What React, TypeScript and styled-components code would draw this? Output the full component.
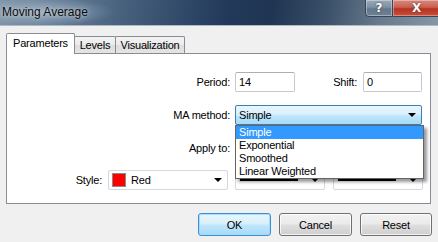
import React from "react";
import styled, { createGlobalStyle } from "styled-components";

const Global = createGlobalStyle`
  html, body { margin: 0; padding: 0; background: #f0f0f0; }
  body { font-family: "Liberation Sans", Arial, sans-serif; font-size: 11px; letter-spacing: -0.2px; color: #000; }
  * { box-sizing: border-box; }
`;

const Window = styled.div`
  width: 438px;
  height: 242px;
  display: flex;
  flex-direction: column;
  background: #f0f0f0;
  overflow: hidden;
`;

const TitleBar = styled.div`
  height: 26px;
  flex: none;
  display: flex;
  align-items: flex-start;
  border-bottom: 1px solid #aeb9c4;
  background:
    radial-gradient(ellipse 70px 14px at 45px 12px, rgba(190, 205, 220, 0.55), rgba(190, 205, 220, 0) 100%),
    linear-gradient(100deg, #8196aa 0%, #637c95 14%, #405a77 32%, #22395a 52%, #1f3552 62%, #3a4f68 74%, #66788b 86%, #8796a5 100%);
`;

const Title = styled.div`
  font-size: 12px;
  letter-spacing: 0;
  padding: 5px 0 0 2px;
  color: #0a0a0a;
  text-shadow: 0 0 6px rgba(255, 255, 255, 0.55), 0 0 2px rgba(255, 255, 255, 0.4);
`;

const Caption = styled.div`
  margin-left: auto;
  display: flex;
  margin-top: -1px;
  margin-right: -3px;
`;

const CapButton = styled.div<{ $close?: boolean }>`
  width: ${(p) => (p.$close ? 48 : 28)}px;
  height: 18px;
  display: flex;
  align-items: center;
  justify-content: center;
  color: #fff;
  font-family: "DejaVu Sans", sans-serif;
  font-weight: bold;
  font-size: 12px;
  text-shadow: 0 0 2px #333;
  border: 1px solid #35465a;
  border-left-width: ${(p) => (p.$close ? 0 : 1)}px;
  border-radius: ${(p) => (p.$close ? "0 0 4px 0" : "0 0 0 4px")};
  box-shadow: inset 0 0 0 1px rgba(255, 255, 255, 0.35);
  background: ${(p) =>
    p.$close
      ? "linear-gradient(#d8897e 0%, #c9604f 45%, #b8321f 55%, #c8503a 100%)"
      : "linear-gradient(#9aa9b8 0%, #7f90a2 45%, #63778c 55%, #6e8296 100%)"};
`;

const TabStrip = styled.div`
  display: flex;
  align-items: flex-end;
  height: 20px;
  margin-top: 7px;
  padding-left: 6px;
  position: relative;
  z-index: 1;
`;

const Tab = styled.div<{ $active?: boolean; $w: number }>`
  width: ${(p) => p.$w}px;
  height: ${(p) => (p.$active ? 21 : 17)}px;
  margin-bottom: ${(p) => (p.$active ? -1 : 0)}px;
  margin-left: ${(p) => (p.$active ? 0 : -1)}px;
  border: 1px solid #898c95;
  border-bottom: none;
  border-radius: 2px 2px 0 0;
  background: ${(p) =>
    p.$active ? "#fff" : "linear-gradient(#f3f3f3 0%, #ebebeb 50%, #dddddd 51%, #e4e4e4 100%)"};
  display: flex;
  align-items: center;
  justify-content: center;
  padding-bottom: ${(p) => (p.$active ? 3 : 0)}px;
  &:first-child { margin-left: 0; }
`;

const Panel = styled.div`
  margin-left: 6px;
  width: 425px;
  height: 151px;
  flex: none;
  border: 1px solid #898c95;
  background: #fff;
  padding: 18px 0 0 0;
  display: flex;
  flex-direction: column;
`;

const Row = styled.div<{ $top?: number; $raised?: boolean }>`
  display: flex;
  align-items: center;
  height: 20px;
  margin-top: ${(p) => p.$top ?? 0}px;
  position: relative;
  z-index: ${(p) => (p.$raised ? 3 : 1)};
`;

const Label = styled.div<{ $w: number; $gap?: number }>`
  width: ${(p) => p.$w}px;
  margin-right: ${(p) => p.$gap ?? 5}px;
  text-align: right;
  flex: none;
`;

const TextBox = styled.div<{ $w: number }>`
  width: ${(p) => p.$w}px;
  height: 20px;
  border: 1px solid #c5cad0;
  border-top-color: #abb0b6;
  border-radius: 2px;
  background: #fff;
  padding-left: 3px;
  display: flex;
  align-items: center;
`;

const Combo = styled.div<{ $w: number; $focus?: boolean; $ml?: number }>`
  position: relative;
  width: ${(p) => p.$w}px;
  height: 20px;
  margin-left: ${(p) => p.$ml ?? 0}px;
  flex: none;
  border: 1px solid ${(p) => (p.$focus ? "#3c7fb1" : "#d5d8dc")};
  border-radius: 2px;
  background: ${(p) =>
    p.$focus ? "linear-gradient(#eaf6fd 0%, #d9f0fc 45%, #bee6fd 55%, #a7d9f5 100%)" : "#fff"};
  display: flex;
  align-items: center;
  padding: 0 4px 0 3px;
  gap: 5px;
`;

const ComboText = styled.div`
  flex: 1;
`;

const Arrow = styled.div`
  width: 0;
  height: 0;
  border-left: 4px solid transparent;
  border-right: 4px solid transparent;
  border-top: 4px solid #000;
  margin-left: auto;
  margin-right: 1px;
  flex: none;
`;

const Swatch = styled.div`
  width: 14px;
  height: 14px;
  border: 1px solid #8a8a8a;
  background: #ff0000;
  flex: none;
`;

const LineSample = styled.div`
  flex: 1;
  height: 2px;
  background: #000;
  margin: 0 8px 0 1px;
`;

const DropList = styled.div`
  position: absolute;
  top: 19px;
  left: -1px;
  width: 189px;
  border: 1px solid #646464;
  background: #fff;
  z-index: 5;
  box-shadow: 3px 3px 3px rgba(0, 0, 0, 0.4);
`;

const Item = styled.div<{ $sel?: boolean }>`
  height: 13px;
  line-height: 13px;
  padding-left: 3px;
  background: ${(p) => (p.$sel ? "#3399ff" : "#fff")};
  color: ${(p) => (p.$sel ? "#fff" : "#000")};
`;

const ButtonRow = styled.div`
  display: flex;
  justify-content: flex-end;
  gap: 8px;
  padding-right: 6px;
  margin-top: 9px;
`;

const Button = styled.div<{ $default?: boolean; $w: number }>`
  width: ${(p) => p.$w}px;
  height: 23px;
  border-radius: 3px;
  border: 1px solid ${(p) => (p.$default ? "#3c8fd6" : "#707070")};
  background: ${(p) =>
    p.$default
      ? "linear-gradient(#eaf6fd 0%, #d9f0fc 45%, #bee6fd 55%, #a7d9f5 100%)"
      : "linear-gradient(#f2f2f2 0%, #ebebeb 45%, #dddddd 55%, #cfcfcf 100%)"};
  box-shadow: inset 0 0 0 1px ${(p) => (p.$default ? "rgba(160,220,250,0.9)" : "rgba(255,255,255,0.75)")};
  display: flex;
  align-items: center;
  justify-content: center;
`;

export default function App() {
  return (
    <>
      <Global />
      <Window>
        <TitleBar>
          <Title>Moving Average</Title>
          <Caption>
            <CapButton>?</CapButton>
            <CapButton $close>X</CapButton>
          </Caption>
        </TitleBar>
        <TabStrip>
          <Tab $active $w={69}>Parameters</Tab>
          <Tab $w={42}>Levels</Tab>
          <Tab $w={70}>Visualization</Tab>
        </TabStrip>
        <Panel>
          <Row>
            <Label $w={223}>Period:</Label>
            <TextBox $w={60}>14</TextBox>
            <Label $w={62} $gap={6}>Shift:</Label>
            <TextBox $w={59}>0</TextBox>
          </Row>
          <Row $top={13} $raised>
            <Label $w={223}>MA method:</Label>
            <Combo $w={187} $focus>
              <ComboText>Simple</ComboText>
              <Arrow />
              <DropList>
                <Item $sel>Simple</Item>
                <Item>Exponential</Item>
                <Item>Smoothed</Item>
                <Item>Linear Weighted</Item>
              </DropList>
            </Combo>
          </Row>
          <Row $top={13}>
            <Label $w={223}>Apply to:</Label>
            <Combo $w={187}>
              <Arrow />
            </Combo>
          </Row>
          <Row $top={12}>
            <Label $w={95} $gap={6}>Style:</Label>
            <Combo $w={120}>
              <Swatch />
              <ComboText>Red</ComboText>
              <Arrow />
            </Combo>
            <Combo $w={90} $ml={7}>
              <LineSample />
              <Arrow />
            </Combo>
            <Combo $w={90} $ml={8}>
              <LineSample />
              <Arrow />
            </Combo>
          </Row>
        </Panel>
        <ButtonRow>
          <Button $default $w={73}>OK</Button>
          <Button $w={73}>Cancel</Button>
          <Button $w={72}>Reset</Button>
        </ButtonRow>
      </Window>
    </>
  );
}
